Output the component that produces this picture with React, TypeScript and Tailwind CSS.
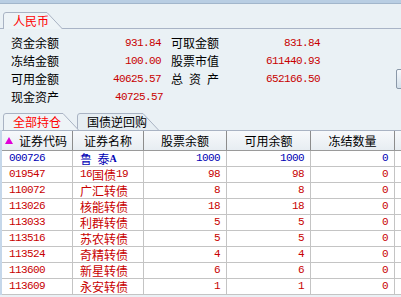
/** 资金股份 panel: 人民币 summary + 持仓 table. */

const cjk = "font-['Noto_Sans_CJK_SC','Noto_Sans',sans-serif]";
const mono = "font-['Liberation_Mono','DejaVu_Sans_Mono',monospace] text-[11px] tracking-[-0.6px]";

type Row = {
  code: string;
  name: React.ReactNode;
  total: string;
  usable: string;
  frozen: string;
  blue?: boolean;
};

const rows: Row[] = [
  {
    code: "000726",
    name: (
      <>
        鲁&nbsp;&nbsp;泰<span className="font-['Liberation_Serif',serif] text-[10px] font-bold">A</span>
      </>
    ),
    total: "1000",
    usable: "1000",
    frozen: "0",
    blue: true,
  },
  {
    code: "019547",
    name: (
      <>
        <span className={mono}>16</span>国债<span className={mono}>19</span>
      </>
    ),
    total: "98",
    usable: "98",
    frozen: "0",
  },
  { code: "110072", name: "广汇转债", total: "8", usable: "8", frozen: "0" },
  { code: "113026", name: "核能转债", total: "18", usable: "18", frozen: "0" },
  { code: "113033", name: "利群转债", total: "5", usable: "5", frozen: "0" },
  { code: "113516", name: "苏农转债", total: "5", usable: "5", frozen: "0" },
  { code: "113524", name: "奇精转债", total: "4", usable: "4", frozen: "0" },
  { code: "113600", name: "新星转债", total: "6", usable: "6", frozen: "0" },
  { code: "113609", name: "永安转债", total: "1", usable: "1", frozen: "0" },
];

function Tab({
  label,
  width,
  active,
  className = "",
}: {
  label: string;
  width: number;
  active?: boolean;
  className?: string;
}) {
  const slant = 16;
  return (
    <div className={`relative h-[17px] ${className}`} style={{ width }}>
      <svg className="absolute inset-0" width={width} height={17}>
        <path
          d={`M0.5 17 V3 Q0.5 0.5 3 0.5 H${width - slant} L${width - 0.5} 17`}
          fill={active ? "#eef4f7" : "#e6eef3"}
          stroke="#a9b3c3"
          strokeWidth="1"
        />
      </svg>
      <span
        className={`relative block pl-[10px] text-[12px] leading-[17px] ${cjk} ${
          active ? "text-[#ff0000]" : "text-black"
        }`}
      >
        {label}
      </span>
    </div>
  );
}

function InfoRow({
  l1,
  v1,
  l2,
  v2,
  shift = 0,
}: {
  l1: string;
  v1: string;
  l2?: React.ReactNode;
  v2?: string;
  shift?: number;
}) {
  return (
    <div className="flex h-[18px] items-center pl-[11px]">
      <span className={`w-[48px] text-[12px] text-black ${cjk}`}>{l1}</span>
      <span className={`text-right text-[#c80000] ${mono}`} style={{ width: 102 + shift }}>
        {v1}
      </span>
      <span className={`ml-[10px] w-[48px] text-[12px] text-black ${cjk}`} style={{ marginLeft: 10 - shift }}>
        {l2}
      </span>
      <span className={`w-[101px] text-right text-[#c80000] ${mono}`}>{v2}</span>
    </div>
  );
}

export default function App() {
  const cell = "border-r border-[#c4c4c4] h-full flex items-center";
  const head = "border-r border-[#8c8c8c] h-full flex items-center justify-center";
  return (
    <div className={`relative h-[297px] w-[401px] overflow-hidden bg-[#eaf1f5] ${cjk}`}>
      {/* top strip */}
      <div className="h-[3px] bg-[#b9cee3]" />
      <div className="h-px bg-[#a2b6cb]" />

      {/* currency tab */}
      <div className="flex h-[25px] items-end border-b border-[#a9b4c6] pl-[3px]">
        <Tab label="人民币" width={60} active className="-mb-px" />
      </div>

      {/* summary */}
      <div className="pt-[5px]">
        <InfoRow l1="资金余额" v1="931.84" l2="可取金额" v2="831.84" />
        <InfoRow l1="冻结金额" v1="100.00" l2="股票市值" v2="611440.93" />
        <InfoRow
          l1="可用金额"
          v1="40625.57"
          l2={
            <span className="flex w-[48px] justify-between">
              <span>总</span>
              <span>资</span>
              <span>产</span>
            </span>
          }
          v2="652166.50"
        />
        <InfoRow l1="现金资产" v1="40725.57" shift={2} />
      </div>

      {/* side button */}
      <div className="absolute left-[396px] top-[69px] h-[20px] w-[16px] rounded-[2px] border border-[#8a98a8] bg-gradient-to-b from-[#f6f9fc] to-[#d4e0ea]" />

      {/* holding tabs */}
      <div className="flex h-[24px] items-end pl-[3px]">
        <Tab label="全部持仓" width={76} active className="z-10" />
        <Tab label="国债逆回购" width={82} className="-ml-[2px]" />
      </div>

      {/* table */}
      <div className="border-l-2 border-[#c5d7ea] bg-white">
        <div className="flex h-[21px] w-[420px] border-y border-b-[#9a9a9a] border-t-[#a9b3c3] bg-gradient-to-b from-[#f7f9fb] to-[#e7edf2] text-[12px] text-black">
          <div className={`${head} w-[71px] justify-start pl-[3px]`}>
            <svg width="8" height="7" className="mr-[6px]">
              <path d="M4 0 L8 7 H0 Z" fill="#e000d8" />
            </svg>
            证券代码
          </div>
          <div className={`${head} w-[71px]`}>证券名称</div>
          <div className={`${head} w-[83px]`}>股票余额</div>
          <div className={`${head} w-[84px]`}>可用余额</div>
          <div className={`${head} w-[84px]`}>冻结数量</div>
          <div className="flex-1" />
        </div>
        {rows.map((r) => (
          <div
            key={r.code}
            className={`flex h-[16px] w-[420px] border-b border-[#c4c4c4] text-[12px] ${
              r.blue ? "text-[#0000b4]" : "text-[#c80000]"
            }`}
          >
            <div className={`${cell} w-[71px] pl-[7px] ${mono}`}>{r.code}</div>
            <div className={`${cell} w-[71px] pl-[7px]`}>{r.name}</div>
            <div className={`${cell} w-[83px] justify-end pr-[6px] ${mono}`}>{r.total}</div>
            <div className={`${cell} w-[84px] justify-end pr-[6px] ${mono}`}>{r.usable}</div>
            <div className={`${cell} w-[84px] justify-end pr-[6px] ${mono}`}>{r.frozen}</div>
            <div className="flex-1" />
          </div>
        ))}
      </div>
    </div>
  );
}
